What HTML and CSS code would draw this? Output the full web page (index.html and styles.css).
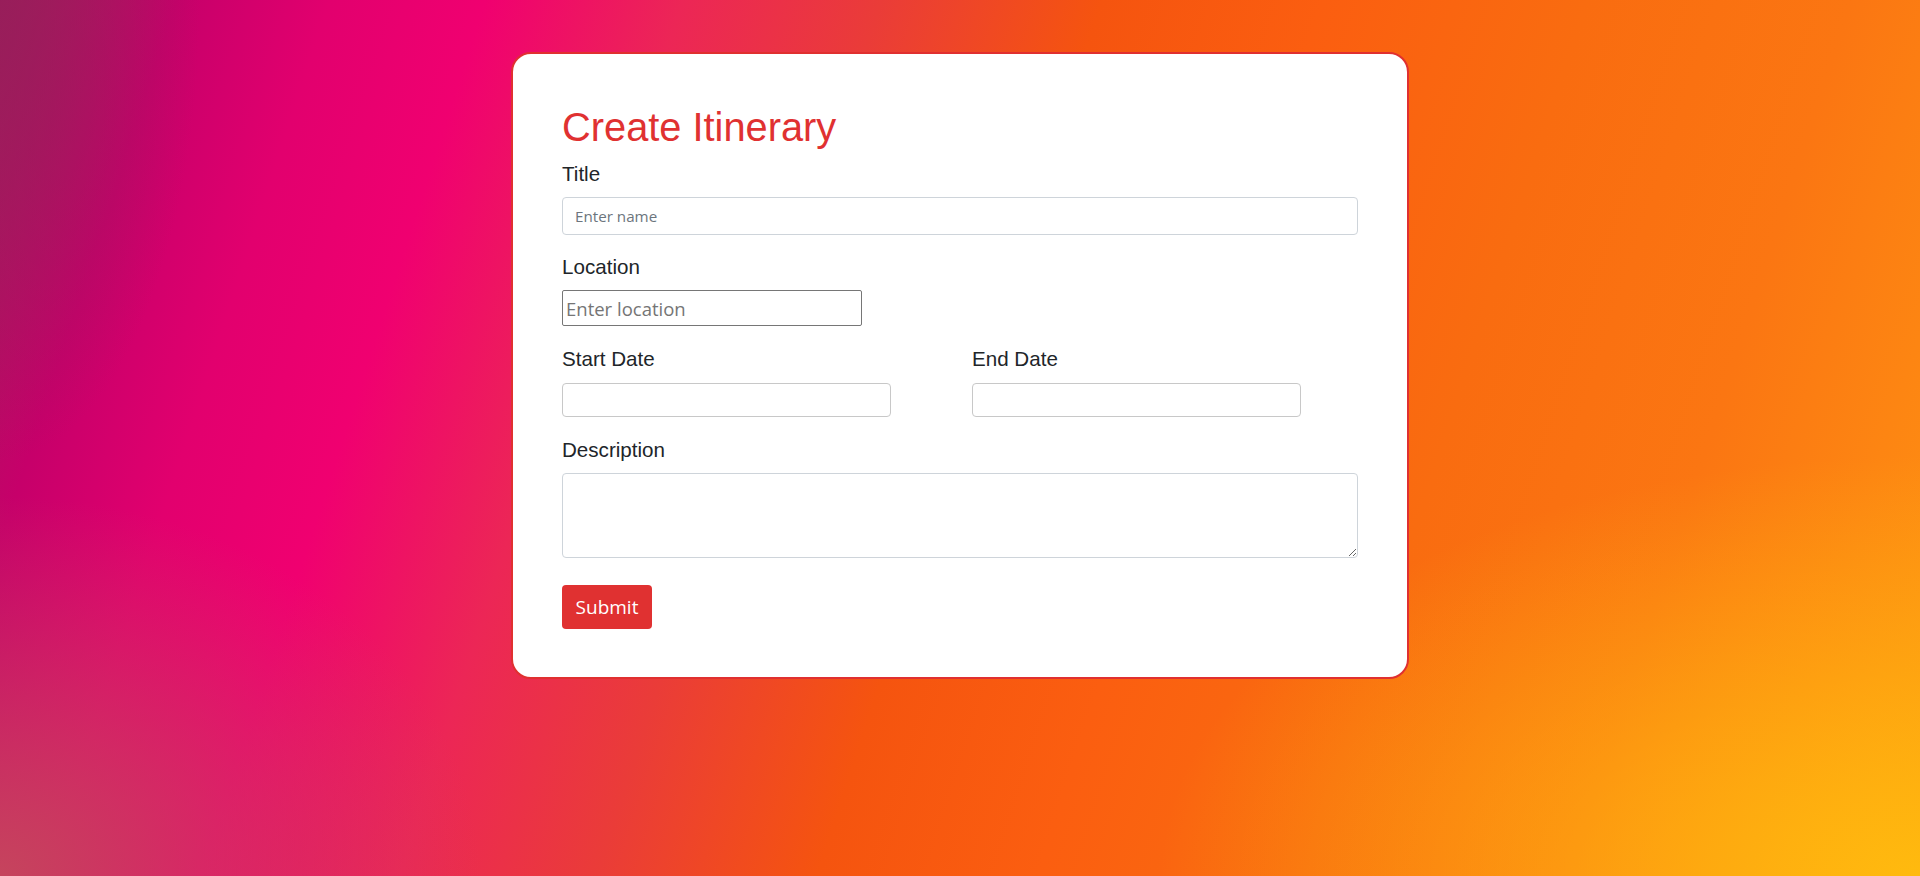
FILE: index.html
```html
<!DOCTYPE html>
<html lang="en">
<head>
<meta charset="utf-8">
<title>Create Itinerary</title>
<link rel="stylesheet" href="styles.css">
</head>
<body>
<main class="page">
  <section class="card">
    <h1 class="card-title">Create Itinerary</h1>
    <form class="form">
      <div class="group group-title">
        <label class="label" for="title">Title</label>
        <input class="control" id="title" type="text" placeholder="Enter name">
      </div>
      <div class="group group-location">
        <label class="label" for="location">Location</label>
        <input class="plain-input" id="location" type="text" placeholder="Enter location">
      </div>
      <div class="group group-dates">
        <div class="date-col">
          <label class="label label-date" for="start">Start Date</label>
          <input class="date-input" id="start" type="text">
        </div>
        <div class="date-col">
          <label class="label label-date" for="end">End Date</label>
          <input class="date-input" id="end" type="text">
        </div>
      </div>
      <div class="group group-desc">
        <label class="label" for="desc">Description</label>
        <textarea class="control textarea" id="desc"></textarea>
      </div>
      <button class="submit" type="button">Submit</button>
    </form>
  </section>
</main>
</body>
</html>
```

FILE: styles.css
```css
* { box-sizing: border-box; }

html, body {
  margin: 0;
  height: 100%;
}

body {
  font-family: "Liberation Sans", Arial, sans-serif;
  color: #212529;
  overflow: hidden;
  background:
    radial-gradient(ellipse 760px 420px at 100% 100%, rgba(255, 188, 14, 0.95), rgba(255, 170, 14, 0) 100%),
    radial-gradient(ellipse 480px 380px at 0% 100%, rgba(196, 72, 92, 0.95), rgba(196, 70, 92, 0) 100%),
    radial-gradient(ellipse 200px 460px at 0% 0%, rgba(150, 30, 90, 0.85), rgba(150, 30, 90, 0) 100%),
    linear-gradient(108deg,
      #a31e5c 0%,
      #c6006a 8%,
      #e2006e 15%,
      #f00070 22%,
      #ec2656 31%,
      #ea3c38 40%,
      #f5540f 50%,
      #fb5e10 60%,
      #f96c10 72%,
      #fb7612 84%,
      #ff9412 100%);
}

.page {
  display: flex;
  justify-content: center;
  padding-top: 52px;
}

.card {
  width: 898px;
  background: #ffffff;
  border: 2px solid #e03030;
  border-radius: 20px;
  padding: 50px 49px 48px;
}

.card-title {
  margin: 0 0 9px;
  font-family: "Liberation Sans", Arial, sans-serif;
  font-weight: 400;
  font-size: 39.8px;
  line-height: 46px;
  color: #e03131;
}

.form {
  display: flex;
  flex-direction: column;
  align-items: flex-start;
}

.group {
  display: flex;
  flex-direction: column;
  width: 100%;
}

.label {
  display: block;
  font-size: 20.6px;
  line-height: 30px;
  margin-bottom: 8px;
}

.label-date { margin-bottom: 9px; }

.group-title { margin-bottom: 17px; }
.group-location { margin-bottom: 18px; }
.group-dates { margin-bottom: 18px; }
.group-desc { margin-bottom: 27px; }

.control {
  width: 100%;
  height: 38px;
  border: 1px solid #ced4da;
  border-radius: 4px;
  padding: 0 12px;
  font-family: "Open Sans", "Noto Sans", sans-serif;
  font-size: 15.2px;
  color: #212529;
  background: #fff;
}

.control::placeholder { color: #6c757d; }

.plain-input {
  width: 300px;
  height: 36px;
  border: 1px solid #767676;
  border-radius: 2px;
  padding: 0 3px;
  font-family: "Open Sans", "Noto Sans", sans-serif;
  font-size: 18.5px;
  color: #212529;
  background: #fff;
}

.plain-input::placeholder { color: #757575; }

.group-dates {
  display: grid;
  grid-template-columns: 410px 1fr;
}

.date-col {
  display: flex;
  flex-direction: column;
}

.date-input {
  width: 329px;
  height: 34px;
  border: 1px solid #c8c8c8;
  border-radius: 4px;
  background: #fff;
}

.textarea {
  height: 85px;
  padding: 6px 12px;
  resize: vertical;
}

.submit {
  height: 44px;
  width: 90px;
  padding: 0;
  border: 0;
  border-radius: 4px;
  background: #e03131;
  color: #ffffff;
  font-family: "Open Sans", "Noto Sans", sans-serif;
  font-size: 19px;
}
```
